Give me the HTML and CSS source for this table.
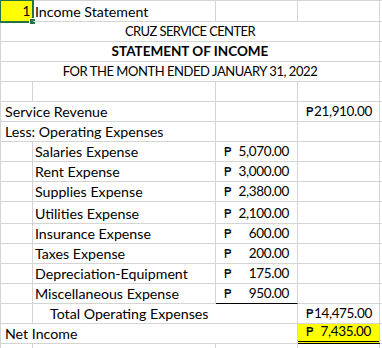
FILE: index.html
```html
<!DOCTYPE html>
<html>
<head>
<meta charset="utf-8">
<link rel="stylesheet" href="styles.css">
</head>
<body>
<div class="sheet">
  <!-- row 1 -->
  <div class="c sel-cell r"><span class="num">1</span><span class="sel"></span><span class="handle"></span></div>
  <div class="c">Income Statement</div>
  <div class="c"></div>
  <div class="c"></div>
  <div class="c"></div>
  <!-- row 2-4 -->
  <div class="c span4 ctr"><span class="caps caps1">CRUZ SERVICE CENTER</span></div>
  <div class="c"></div>
  <div class="c span4 ctr"><span class="caps caps2">STATEMENT OF INCOME</span></div>
  <div class="c"></div>
  <div class="c span4 ctr"><span class="caps caps3">FOR THE MONTH ENDED JANUARY 31, 2022</span></div>
  <div class="c"></div>
  <!-- row 5 -->
  <div class="c"></div><div class="c"></div><div class="c"></div><div class="c"></div><div class="c"></div>
  <!-- row 6 -->
  <div class="c span2 lft">Service Revenue</div>
  <div class="c"></div>
  <div class="c acct"><span class="peso">₱</span><span class="num">21,910.00</span></div>
  <div class="c"></div>
  <!-- row 7 -->
  <div class="c span2 lft">Less: Operating Expenses</div>
  <div class="c"></div><div class="c"></div><div class="c"></div>
  <!-- expenses -->
  <div class="c"></div><div class="c">Salaries Expense</div><div class="c acct"><span class="peso">₱</span><span class="num">5,070.00</span></div><div class="c"></div><div class="c"></div>
  <div class="c"></div><div class="c">Rent Expense</div><div class="c acct"><span class="peso">₱</span><span class="num">3,000.00</span></div><div class="c"></div><div class="c"></div>
  <div class="c"></div><div class="c">Supplies Expense</div><div class="c acct"><span class="peso">₱</span><span class="num">2,380.00</span></div><div class="c"></div><div class="c"></div>
  <div class="c"></div><div class="c">Utilities Expense</div><div class="c acct"><span class="peso">₱</span><span class="num">2,100.00</span></div><div class="c"></div><div class="c"></div>
  <div class="c"></div><div class="c">Insurance Expense</div><div class="c acct"><span class="peso">₱</span><span class="num">600.00</span></div><div class="c"></div><div class="c"></div>
  <div class="c"></div><div class="c">Taxes Expense</div><div class="c acct"><span class="peso">₱</span><span class="num">200.00</span></div><div class="c"></div><div class="c"></div>
  <div class="c"></div><div class="c">Depreciation-Equipment</div><div class="c acct"><span class="peso">₱</span><span class="num">175.00</span></div><div class="c"></div><div class="c"></div>
  <div class="c"></div><div class="c">Miscellaneous Expense</div><div class="c acct underline"><span class="peso">₱</span><span class="num">950.00</span></div><div class="c"></div><div class="c"></div>
  <!-- total -->
  <div class="c"></div>
  <div class="c span2 indent">Total Operating Expenses</div>
  <div class="c acct"><span class="peso">₱</span><span class="num">14,475.00</span></div>
  <div class="c"></div>
  <!-- net income -->
  <div class="c span3 lft">Net Income</div>
  <div class="c acct net"><span class="peso">₱</span><span class="num">7,435.00</span></div>
  <div class="c"></div>
  <!-- row 18 -->
  <div class="c"></div><div class="c"></div><div class="c"></div><div class="c"></div><div class="c"></div>
</div>
</body>
</html>
```

FILE: styles.css
```css
html, body {
  margin: 0;
  padding: 0;
  background: #ffffff;
}
body {
  width: 382px;
  height: 348px;
  overflow: hidden;
  font-family: Lato, "Noto Sans", "DejaVu Sans", sans-serif;
  font-size: 14.2px;
  color: #000000;
}
.sheet {
  display: grid;
  grid-template-columns: 32px 183px 82px 82px 20px;
  grid-template-rows: 21px repeat(9, 20px) 22px repeat(6, 20px) 20px;
  border-left: 1px solid #d4d4d4;
  border-top: 1px solid #d4d4d4;
}
.c {
  box-sizing: border-box;
  border-right: 1px solid #d4d4d4;
  border-bottom: 1px solid #d4d4d4;
  display: flex;
  align-items: flex-end;
  padding: 0 2px 1px 2px;
  white-space: nowrap;
  line-height: 17px;
  position: relative;
}
.r { justify-content: flex-end; }
.span2 { grid-column: span 2; }
.span3 { grid-column: span 3; }
.span4 { grid-column: span 4; }
.ctr { justify-content: center; }
.caps { font-size: 13px; }
.caps1 { letter-spacing: -0.6px; }
.caps2 { font-size: 13.5px; font-weight: 700; letter-spacing: 0; }
.caps3 { letter-spacing: -0.45px; }
.lft { padding-left: 4px; }
.indent { padding-left: 17px; }
.num {
  font-size: 13.5px;
  letter-spacing: -0.35px;
}
.acct {
  justify-content: space-between;
  padding: 0 8px 1px 8px;
}
.peso {
  font-family: "DejaVu Sans", sans-serif;
  font-size: 12.5px;
  line-height: 17px;
}
.underline {
  border-bottom: 1px solid #000000;
}
.net {
  background: #ffff00;
  border-bottom: 3px double #000000;
}
.sel-cell {
  background: #ffff00;
  padding-right: 2px;
}
.sel {
  position: absolute;
  left: -2px;
  top: -2px;
  right: -2px;
  bottom: -2px;
  border: 2px solid #217346;
}
.handle {
  position: absolute;
  right: -4px;
  bottom: -4px;
  width: 5px;
  height: 5px;
  background: #217346;
  border: 1px solid #ffffff;
}
```
